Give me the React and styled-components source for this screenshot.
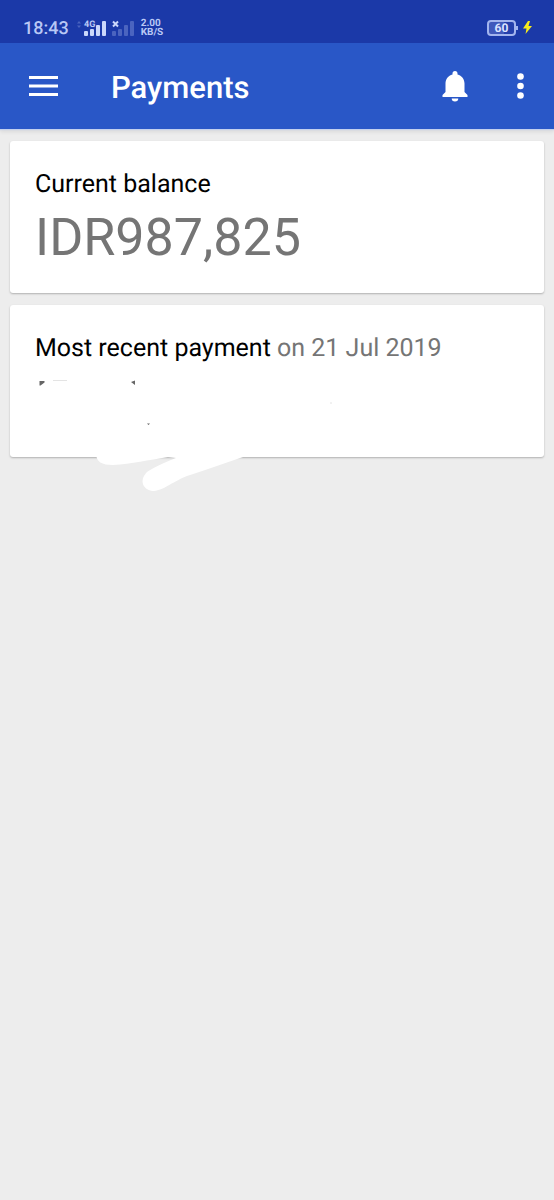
import React from 'react'
import styled, { createGlobalStyle } from 'styled-components'

const GlobalStyle = createGlobalStyle`
    *{
        box-sizing:border-box;
    }
    body{
        margin:0;
        background-color:#ededed;
        font-family:Roboto, "Noto Sans", sans-serif;
        text-rendering:geometricPrecision;
    }
`

const Page = styled.div`
    min-height:100vh;
`

const StatusBar = styled.div`
    display:flex;
    align-items:center;
    justify-content:space-between;
    height:43px;
    padding:12px 22px 0 23px;
    background-color:#1b39a8;
    color:#b9c8f5;
`

const StatusGroup = styled.div`
    display:flex;
    align-items:center;
    gap:${p => p.$gap}px;
`

const Clock = styled.span`
    font-size:18px;
    font-weight:500;
    line-height:22px;
    padding-top:2px;
`

const Speed = styled.span`
    display:flex;
    flex-direction:column;
    padding-top:1px;
    font-size:10px;
    font-weight:700;
    line-height:9px;
`

const Battery = styled.span`
    position:relative;
    display:flex;
    align-items:center;
    justify-content:center;
    width:29px;
    height:16px;
    border:2px solid #a3b5ee;
    border-radius:4px;
    background:linear-gradient(to right, #4059bb 60%, #2440ac 60%);
    color:#dbe4ff;
    font-size:12px;
    font-weight:700;
    line-height:12px;
    &::after{
        content:"";
        position:absolute;
        right:-4px;
        top:4px;
        width:2px;
        height:4px;
        background-color:#a3b5ee;
    }
`

const AppBar = styled.header`
    display:flex;
    align-items:center;
    height:86px;
    padding:0 18px 0 23px;
    background-color:#2957c7;
    box-shadow:0 1px 1px #c3d0ee, 0 3px 4px rgba(0,0,0,0.08);
    color:white;
`

const Title = styled.h1`
    flex:1;
    margin:0 0 0 47px;
    padding-top:3px;
    font-size:31px;
    font-weight:500;
    line-height:40px;
`

const IconButton = styled.button`
    display:flex;
    align-items:center;
    justify-content:center;
    width:${p => p.$width}px;
    height:44px;
    padding:0;
    border:0;
    background:none;
    color:inherit;
`

const Actions = styled.div`
    display:flex;
    gap:36px;
`

const Cards = styled.main`
    display:flex;
    flex-direction:column;
    gap:12px;
    padding:12px 10px;
`

const Card = styled.section`
    position:relative;
    min-height:152px;
    padding:25px 25px 19px;
    border-radius:3px;
    background-color:white;
    box-shadow:0 1px 2px rgba(0,0,0,0.26);
`

const CardLabel = styled.h2`
    margin:0;
    color:black;
    font-size:25px;
    font-weight:400;
    line-height:38px;
`

const Muted = styled.span`
    color:#757575;
`

const Amount = styled.p`
    margin:0;
    color:#757575;
    font-size:52px;
    line-height:68px;
`

const Scribble = styled.svg`
    position:absolute;
    left:0;
    top:0;
    overflow:visible;
    pointer-events:none;
`

function SignalIcons() {
    return (
        <svg width="60" height="18" viewBox="0 0 60 18" fill="currentColor" aria-hidden="true">
            <path d="M2 4.500 4 2l2 2.500zM2 6.500h4L4 9z" opacity=".3" />
            <text x="9" y="8" fontSize="9" fontWeight="700">4G</text>
            <g fill="#cbd8fb">
                <rect x="9" y="12" width="4" height="5" rx="1" />
                <rect x="15" y="10" width="4" height="7" rx="1" />
                <rect x="21" y="6" width="4" height="11" rx="1" />
                <rect x="27" y="2" width="4" height="15" rx="1" />
            </g>
            <path d="m38 2.500 5 5m0-5-5 5" stroke="#cbd8fb" strokeWidth="2" />
            <g opacity=".3">
                <rect x="37" y="12" width="4" height="5" rx="1" />
                <rect x="43" y="10" width="4" height="7" rx="1" />
                <rect x="49" y="6" width="4" height="11" rx="1" />
                <rect x="55" y="2" width="4" height="15" rx="1" />
            </g>
        </svg>)
}

function App() {
    return (
        <Page>
            <GlobalStyle />
            <StatusBar>
                <StatusGroup $gap={6}>
                    <Clock>18:43</Clock>
                    <SignalIcons />
                    <Speed><span>2.00</span><span>KB/S</span></Speed>
                </StatusGroup>
                <StatusGroup $gap={7}>
                    <Battery>60</Battery>
                    <svg width="9" height="13" viewBox="0 0 9 13" aria-hidden="true">
                        <path d="M5 0 0 7.500h3.500L2.500 13 9 5H5.500L7 0z" fill="#f7ea1c" />
                    </svg>
                </StatusGroup>
            </StatusBar>
            <AppBar>
                <IconButton $width={41} aria-label="Menu">
                    <svg width="30" height="20" viewBox="0 0 30 20" fill="currentColor">
                        <path d="M0 0h29v3H0zM0 8.500h29v3H0zM0 17h29v3H0z" />
                    </svg>
                </IconButton>
                <Title>Payments</Title>
                <Actions>
                    <IconButton $width={26} aria-label="Notifications">
                        <svg width="26" height="31" viewBox="0 0 26 31" fill="currentColor">
                            <path d="M13 0a2.500 2.500 0 0 0-2.500 2.500v.9C6.200 4.500 3.500 8 3.500 12.500V21L.5 24v2h25v-2l-3-3v-8.500c0-4.500-2.700-8-7-9.100v-.9A2.500 2.500 0 0 0 13 0zM9.700 27.500a3.300 3 0 0 0 6.600 0z" />
                        </svg>
                    </IconButton>
                    <IconButton $width={32} aria-label="More options">
                        <svg width="7" height="26" viewBox="0 0 7 26" fill="currentColor">
                            <circle cx="3.500" cy="3.500" r="3.300" />
                            <circle cx="3.500" cy="13" r="3.300" />
                            <circle cx="3.500" cy="22.500" r="3.300" />
                        </svg>
                    </IconButton>
                </Actions>
            </AppBar>
            <Cards>
                <Card>
                    <CardLabel>Current balance</CardLabel>
                    <Amount>IDR987,825</Amount>
                </Card>
                <Card>
                    <CardLabel>Most recent payment <Muted>on 21 Jul 2019</Muted></CardLabel>
                    <Scribble width="330" height="190" viewBox="0 0 330 190" aria-hidden="true">
                        {/* white marker strokes that run over the card's lower edge */}
                        <path d="M86 148C86 157 92 160 103 160C122 159 138 155 158 152L166 153C154 158 144 162 137 167C128 176 134 186 144 186C154 185 160 178 177 171C198 164 216 158 236 151V144H86z" fill="white" />
                        {/* what is left of the hidden text */}
                        <path d="M29.500 76h5v1.500l-4 3h-1zM121 77l4-1.500v4.500zM137 118.500h3l-1.500 1.500z" fill="#666666" />
                        <path d="M43 75.500h14M320 98h2" stroke="#e4e4e4" />
                    </Scribble>
                </Card>
            </Cards>
        </Page>
    )
}

export default App
